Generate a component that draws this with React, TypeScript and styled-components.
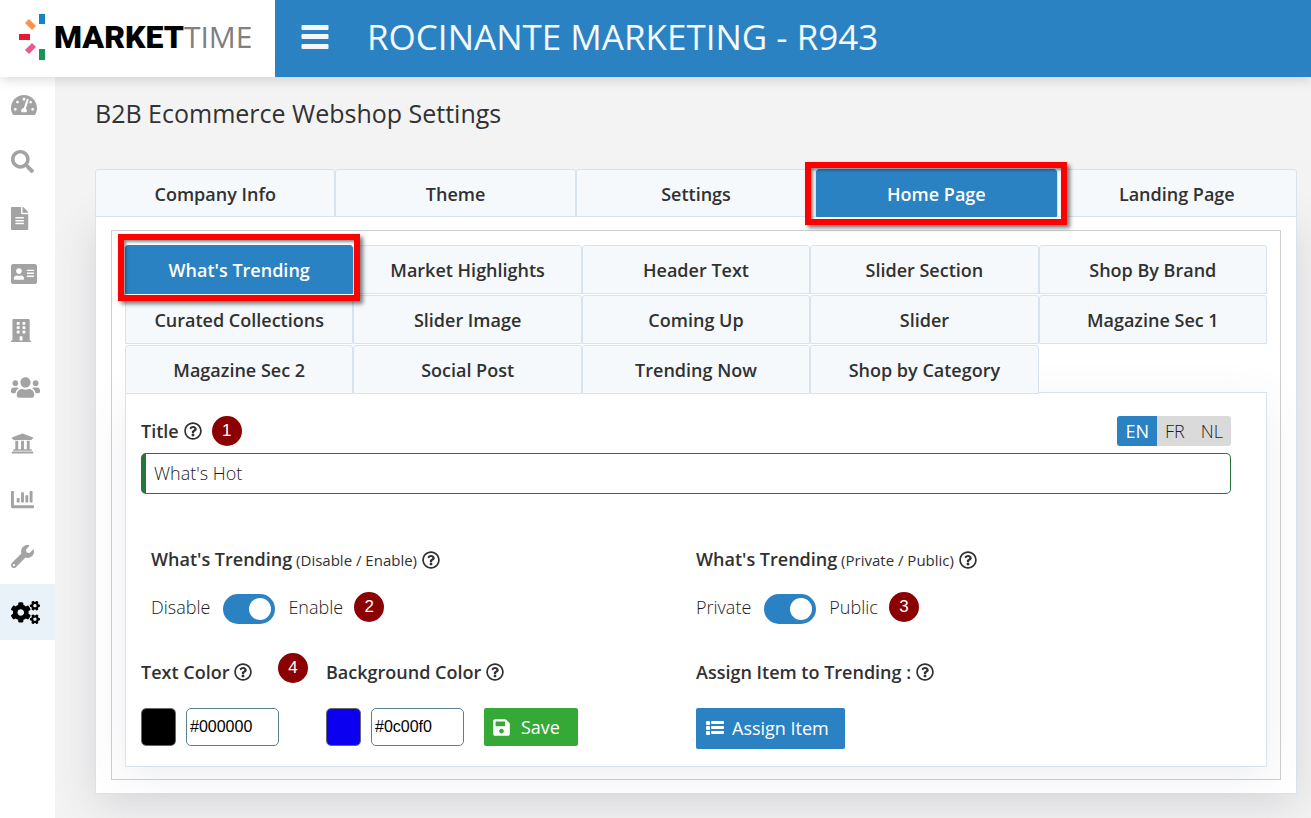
import React, { useState } from "react";
import styled, { createGlobalStyle, css } from "styled-components";
import {
  FaAddressCard, FaBuilding, FaChartBar, FaCogs, FaFileAlt, FaRegQuestionCircle,
  FaSave, FaSearch, FaTachometerAlt, FaUniversity, FaUsers, FaWrench,
} from "react-icons/fa";

const blue = "#2b82c3";
const line = "#d8e3ee";
const ink = "#313131";
const lightTextInk = "#1c1c1c";

const GlobalStyle = createGlobalStyle`
  *, *::before, *::after { box-sizing: border-box; }
  body {
    margin: 0;
    background: #f3f3f3;
    color: ${ink};
    font-family: "Open Sans", "Noto Sans", sans-serif;
    font-size: 18px;
    font-weight: 300;
    line-height: 24px;
  }
  button, input { font: inherit; color: inherit; }
  button { cursor: pointer; }
`;

const Page = styled.div`
  display: flex;
  flex-direction: column;
  min-height: 100vh;
`;

const Header = styled.header`
  position: relative;
  z-index: 2;
  display: flex;
  height: 77px;
  background: ${blue};
  box-shadow: 0 2px 12px rgba(0, 0, 0, 0.16);
`;

const Brand = styled.a`
  display: flex;
  align-items: center;
  width: 275px;
  padding-left: 18px;
  padding-bottom: 3px;
  background: #fff;
  color: #000;
  text-decoration: none;
`;

const BrandMark = styled.svg`
  width: 28px;
  height: 48px;
  margin-right: 8px;
`;

const BrandStrong = styled.span`
  font: 900 32px/40px Roboto, sans-serif;
`;

const BrandThin = styled.span`
  font: 400 30px/40px "Open Sans", sans-serif;
  color: #808080;
`;

const MenuButton = styled.button`
  display: flex;
  align-items: center;
  margin-left: 26px;
  padding: 0 0 3px;
  border: 0;
  background: none;
  color: #f3f7fb;
`;

const AccountName = styled.h1`
  margin: 0 0 0 36px;
  color: #f5f8fb;
  font-size: 35px;
  font-weight: 400;
  line-height: 73px;
`;

const Body = styled.div`
  display: flex;
  flex: 1;
`;

const Sidebar = styled.nav`
  position: relative;
  z-index: 1;
  flex: none;
  width: 55px;
  background: #fff;
`;

const SideLink = styled.a<{ $active?: boolean }>`
  display: flex;
  align-items: center;
  height: 56px;
  padding-left: 11px;
  color: ${(p) => (p.$active ? "#000" : "#a3a3a3")};
  background: ${(p) => (p.$active ? "#eaf2f9" : "transparent")};
`;

const SideList = styled.div`
  display: grid;
  grid-template-rows: repeat(3, 56px 56px 57px) 56px;
  align-items: end;
`;

const Main = styled.main`
  flex: 1;
  min-width: 0;
  padding: 20px 14px 24px 40px;
`;

const PageTitle = styled.h2`
  margin: 0 0 40px;
  font-size: 25px;
  font-weight: 400;
  line-height: 32px;
`;

const TabList = styled.div<{ $nested?: boolean }>`
  position: relative;
  display: grid;
  grid-template-columns: repeat(5, 1fr);
  grid-auto-rows: ${(p) => (p.$nested ? "49px" : "48px")};
  row-gap: 1px;
  margin-bottom: ${(p) => (p.$nested ? "-2px" : "-1px")};
`;

const TabCell = styled.div`
  position: relative;
  display: flex;
`;

const Tab = styled.button<{ $active: boolean }>`
  flex: 1;
  padding: 1px 0 0;
  border: 1px solid ${(p) => (p.$active ? blue : line)};
  border-radius: 3px 3px 0 0;
  background: ${(p) => (p.$active ? blue : "#f5f9fc")};
  color: ${(p) => (p.$active ? "#fff" : ink)};
  font-weight: 600;
`;

const Highlight = styled.span<{ $nested?: boolean }>`
  position: absolute;
  z-index: 1;
  inset: ${(p) => (p.$nested ? "-11px -7px -7px" : "-7px -10px -8px -11px")};
  border: 6px solid #f00;
  box-shadow: 3px 3px 4px rgba(0, 0, 0, 0.5), inset 2px 2px 3px rgba(0, 0, 0, 0.45);
  pointer-events: none;
`;

const panel = css`
  border: 1px solid ${line};
  background: #fff;
`;

const OuterPanel = styled.section`
  ${panel}
  padding: 13px 15px;
  box-shadow: 0 10px 40px rgba(72, 76, 100, 0.16);
`;

const Frame = styled.div`
  padding: 14px 13px 12px;
  border: 1px solid #cdcfd2;
`;

const InnerPanel = styled.section`
  ${panel}
  padding: 23px 35px 17px 15px;
  box-shadow: 0 10px 40px rgba(82, 85, 122, 0.1);
`;

const TitleRow = styled.div`
  display: flex;
  align-items: center;
  margin-bottom: 7px;
`;

const Label = styled.label`
  font-weight: 600;
  white-space: nowrap;
`;

const LabelRow = styled.div`
  display: flex;
  align-items: center;
  gap: 5px;
`;

const LabelNote = styled.span`
  font-size: 15px;
  font-weight: 400;
`;

const Languages = styled.div`
  display: flex;
  margin-left: auto;
  overflow: hidden;
  border-radius: 3px;
`;

const Language = styled.button<{ $active: boolean }>`
  height: 30px;
  padding: 0 8px 1px;
  border: 0;
  background: ${(p) => (p.$active ? blue : "#dadada")};
  color: ${(p) => (p.$active ? "#fff" : lightTextInk)};
  font-weight: ${(p) => (p.$active ? 400 : 300)};
`;

const TitleInput = styled.input`
  display: block;
  width: 100%;
  height: 41px;
  padding: 0 8px 1px;
  border: 1px solid #28753a;
  border-left-width: 5px;
  border-radius: 5px;
  background: #fff;
  color: ${lightTextInk};
`;

const Columns = styled.div`
  display: grid;
  grid-template-columns: 1fr 1fr;
  margin-top: 53px;
  row-gap: 36px;
`;

const Cell = styled.div<{ $inset?: boolean }>`
  padding-left: ${(p) => (p.$inset ? "10px" : "0")};
`;

const SwitchRow = styled.div`
  display: flex;
  align-items: center;
  gap: 13px;
  height: 30px;
  margin-top: 22px;
`;

const SwitchText = styled.span`
  padding-bottom: 4px;
  color: ${lightTextInk};
`;

const Switch = styled.input`
  appearance: none;
  width: 52px;
  height: 30px;
  margin: 0;
  padding: 4px;
  border-radius: 15px;
  background: #bbb;
  cursor: pointer;
  &::before {
    content: "";
    display: block;
    width: 22px;
    height: 22px;
    border-radius: 50%;
    background: #fff;
  }
  &:checked { background: ${blue}; }
  &:checked::before { margin-left: auto; }
`;

const Step = styled.span`
  display: inline-flex;
  align-items: center;
  justify-content: center;
  width: 30px;
  height: 30px;
  border-radius: 50%;
  background: #8b0000;
  color: #fff;
  font: 17px/20px "Liberation Sans", Arial, sans-serif;
`;

const TitleStep = styled(Step)`
  margin-left: 10px;
`;

const SwitchStep = styled(Step)`
  margin: 0 0 4px -2px;
`;

const FloatingStep = styled(Step)`
  position: absolute;
  top: -7px;
  right: 18px;
`;

const ColorGroup = styled.div`
  display: flex;
`;

const ColorField = styled.div`
  position: relative;
  width: 185px;
`;

const ColorInputs = styled.div`
  display: flex;
  gap: 10px;
  margin-top: 24px;
`;

const Swatch = styled.input`
  appearance: none;
  width: 35px;
  height: 38px;
  padding: 0;
  border: 1px solid #67686b;
  border-radius: 5px;
  overflow: hidden;
  &::-webkit-color-swatch-wrapper { padding: 0; }
  &::-webkit-color-swatch { border: 0; }
`;

const HexInput = styled.input`
  width: 93px;
  height: 38px;
  padding: 0 3px;
  border: 1px solid #5c7f90;
  border-radius: 5px;
  background: #fff;
  color: #000;
  font: 16px/20px "Liberation Sans", Arial, sans-serif;
`;

const ActionButton = styled.button<{ $color: string }>`
  display: flex;
  align-items: center;
  gap: 8px;
  height: 41px;
  padding: 0 16px 2px 10px;
  border: 0;
  border-radius: 2px;
  background: ${(p) => p.$color};
  color: #fff;
  font-weight: 400;
`;

const AssignButton = styled(ActionButton)`
  margin-top: 24px;
`;

const SaveButton = styled(ActionButton)`
  align-self: flex-end;
  gap: 10px;
  height: 38px;
  margin-left: -27px;
  padding: 0 18px 0 8px;
`;

const sideItems = [
  { name: "Dashboard", icon: FaTachometerAlt, size: 26 },
  { name: "Search", icon: FaSearch, size: 23 },
  { name: "Documents", icon: FaFileAlt, size: 23 },
  { name: "Contacts", icon: FaAddressCard, size: 26 },
  { name: "Companies", icon: FaBuilding, size: 23 },
  { name: "Users", icon: FaUsers, size: 29 },
  { name: "Bank", icon: FaUniversity, size: 23 },
  { name: "Reports", icon: FaChartBar, size: 23 },
  { name: "Tools", icon: FaWrench, size: 23 },
  { name: "Settings", icon: FaCogs, size: 29 },
];

const mainTabs = ["Company Info", "Theme", "Settings", "Home Page", "Landing Page"];
const sectionTabs = [
  "What's Trending", "Market Highlights", "Header Text", "Slider Section", "Shop By Brand",
  "Curated Collections", "Slider Image", "Coming Up", "Slider", "Magazine Sec 1",
  "Magazine Sec 2", "Social Post", "Trending Now", "Shop by Category",
];

function MenuIcon() {
  return (
    <svg width="30" height="26" viewBox="0 0 30 26" fill="currentColor" aria-hidden="true">
      <rect x="0.5" y="1" width="27" height="5" rx="1" />
      <rect x="0.5" y="10" width="27" height="5" rx="1" />
      <rect x="0.5" y="20" width="27" height="5" rx="1" />
    </svg>
  );
}

function ListIcon() {
  return (
    <svg width="18" height="16" viewBox="0 0 18 16" fill="currentColor" aria-hidden="true">
      <rect y="1" width="4" height="4" rx="1" />
      <rect y="6" width="4" height="4" rx="1" />
      <rect y="11" width="4" height="4" rx="1" />
      <rect x="5" y="1" width="13" height="3" rx="1" />
      <rect x="5" y="6" width="13" height="3" rx="1" />
      <rect x="5" y="11" width="13" height="3" rx="1" />
    </svg>
  );
}

function Tabs({ items, initial, nested }: { items: string[]; initial: string; nested?: boolean }) {
  const [active, setActive] = useState(initial);
  return (
    <TabList role="tablist" $nested={nested}>
      {items.map((item) => (
        <TabCell key={item}>
          <Tab role="tab" aria-selected={item === active} $active={item === active} onClick={() => setActive(item)}>
            {item}
          </Tab>
          {item === initial && <Highlight $nested={nested} />}
        </TabCell>
      ))}
    </TabList>
  );
}

function FieldLabel({ id, text, note }: { id: string; text: string; note?: string }) {
  return (
    <LabelRow>
      <Label htmlFor={id}>
        {text}
        {note && <LabelNote> {note}</LabelNote>}
      </Label>
      <FaRegQuestionCircle size={18} />
    </LabelRow>
  );
}

function Toggle({ id, note, off, on, step }: { id: string; note: string; off: string; on: string; step: number }) {
  return (
    <Cell $inset>
      <FieldLabel id={id} text="What's Trending" note={note} />
      <SwitchRow>
        <SwitchText>{off}</SwitchText>
        <Switch id={id} type="checkbox" role="switch" defaultChecked />
        <SwitchText>{on}</SwitchText>
        <SwitchStep>{step}</SwitchStep>
      </SwitchRow>
    </Cell>
  );
}

function ColorPicker({ id, text, initial, step }: { id: string; text: string; initial: string; step?: number }) {
  const [value, setValue] = useState(initial);
  return (
    <ColorField>
      <FieldLabel id={id} text={text} />
      {step && <FloatingStep>{step}</FloatingStep>}
      <ColorInputs>
        <Swatch type="color" aria-label={text} value={value} onChange={(e) => setValue(e.target.value)} />
        <HexInput id={id} value={value} onChange={(e) => setValue(e.target.value)} />
      </ColorInputs>
    </ColorField>
  );
}

export default function App() {
  const [language, setLanguage] = useState("EN");
  return (
    <Page>
      <GlobalStyle />
      <Header>
        <Brand href="#" aria-label="MarketTime">
          <BrandMark viewBox="0 0 28 48" aria-hidden="true">
            <path d="M21 1h6v10h-6z" fill="#1583c6" />
            <path d="M11 6l7 7-4 4-7-7z" fill="#ff9148" />
            <path d="M1 21h11v6H1z" fill="#e6192e" />
            <path d="M14 30l4 4-7 7-4-4z" fill="#ea5a91" />
            <path d="M21 36h6v11h-6z" fill="#16945a" />
          </BrandMark>
          <BrandStrong>MARKET</BrandStrong>
          <BrandThin>TIME</BrandThin>
        </Brand>
        <MenuButton aria-label="Menu">
          <MenuIcon />
        </MenuButton>
        <AccountName>ROCINANTE MARKETING - R943</AccountName>
      </Header>
      <Body>
        <Sidebar aria-label="Main">
          <SideList>
            {sideItems.map(({ name, icon: Icon, size }) => (
              <SideLink key={name} href="#" aria-label={name} $active={name === "Settings"}>
                <Icon size={size} preserveAspectRatio="xMinYMid meet" />
              </SideLink>
            ))}
          </SideList>
        </Sidebar>
        <Main>
          <PageTitle>B2B Ecommerce Webshop Settings</PageTitle>
          <Tabs items={mainTabs} initial="Home Page" />
          <OuterPanel>
            <Frame>
              <Tabs items={sectionTabs} initial="What's Trending" nested />
              <InnerPanel>
                <TitleRow>
                  <FieldLabel id="title" text="Title" />
                  <TitleStep>1</TitleStep>
                  <Languages>
                    {["EN", "FR", "NL"].map((code) => (
                      <Language key={code} $active={code === language} onClick={() => setLanguage(code)}>
                        {code}
                      </Language>
                    ))}
                  </Languages>
                </TitleRow>
                <TitleInput id="title" defaultValue="What's Hot" />
                <Columns>
                  <Toggle id="enabled" note="(Disable / Enable)" off="Disable" on="Enable" step={2} />
                  <Toggle id="public" note="(Private / Public)" off="Private" on="Public" step={3} />
                  <Cell>
                    <ColorGroup>
                      <ColorPicker id="text-color" text="Text Color" initial="#000000" step={4} />
                      <ColorPicker id="background-color" text="Background Color" initial="#0c00f0" />
                      <SaveButton $color="#35a936">
                        <FaSave size={19} />
                        Save
                      </SaveButton>
                    </ColorGroup>
                  </Cell>
                  <Cell $inset>
                    <FieldLabel id="assign" text="Assign Item to Trending :" />
                    <AssignButton id="assign" $color={blue}>
                      <ListIcon />
                      Assign Item
                    </AssignButton>
                  </Cell>
                </Columns>
              </InnerPanel>
            </Frame>
          </OuterPanel>
        </Main>
      </Body>
    </Page>
  );
}
